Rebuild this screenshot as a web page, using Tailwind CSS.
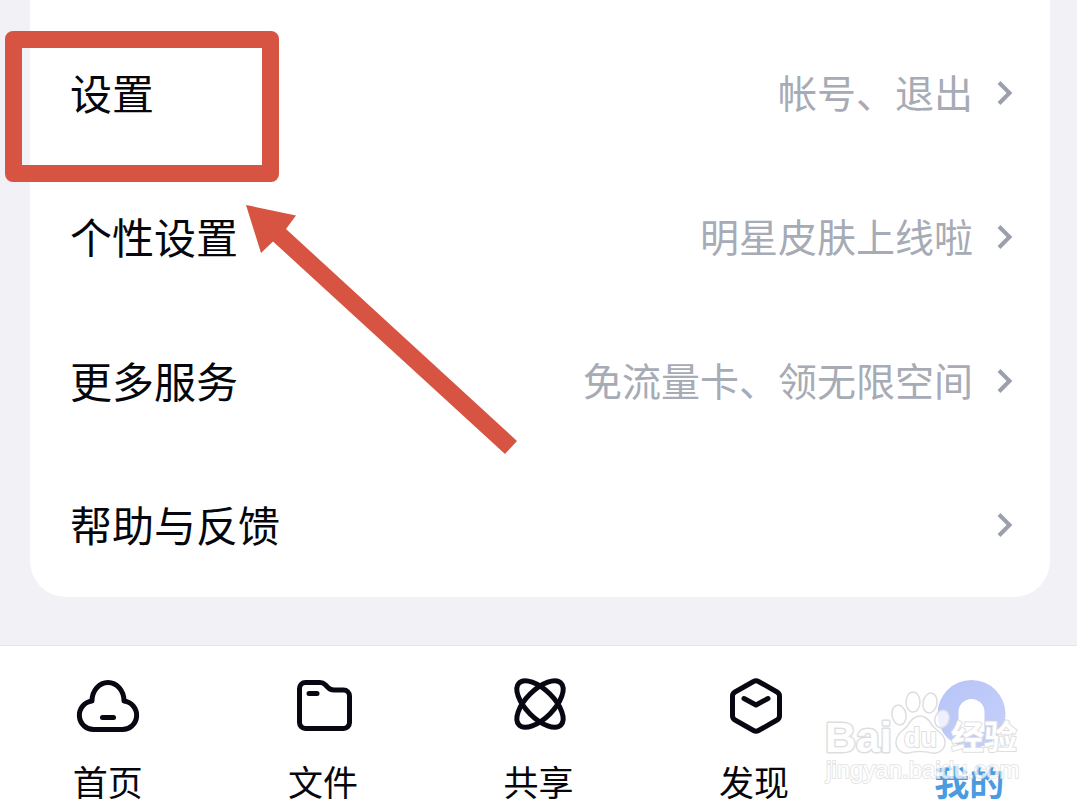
<!DOCTYPE html>
<html lang="zh-CN">
  <head>
    <meta charset="utf-8" />
    <meta name="viewport" content="width=device-width, initial-scale=1" />
    <title>我的</title>
    <script src="https://cdn.jsdelivr.net/npm/@tailwindcss/browser@4"></script>
  </head>

  <body class="relative min-h-screen overflow-x-hidden bg-[#f1f1f6] font-['Noto_Sans_CJK_SC',sans-serif] text-[#05070d]">
    <main class="mr-[27px] mb-12 ml-[30px] rounded-b-[36px] bg-white pt-[21px]">
      <ul>
        <li>
          <a href="#" class="flex h-36 items-center justify-between pr-[37px] pl-10">
            <span class="pb-1 text-[42px]">设置</span>
            <span class="flex items-center gap-6 text-[39px] text-[#a6abb5]">
              <span class="pb-1">帐号、退出</span>
              <svg class="h-6 w-4" viewBox="0 0 16 24" fill="none" stroke="#9a9faa" stroke-width="4"><path d="M2 1.500l10.500 10.500L2 22.500" /></svg>
            </span>
          </a>
        </li>
        <li>
          <a href="#" class="flex h-36 items-center justify-between pr-[37px] pl-10">
            <span class="pb-1 text-[42px]">个性设置</span>
            <span class="flex items-center gap-6 text-[39px] text-[#a6abb5]">
              <span class="pb-1">明星皮肤上线啦</span>
              <svg class="h-6 w-4" viewBox="0 0 16 24" fill="none" stroke="#9a9faa" stroke-width="4"><path d="M2 1.500l10.500 10.500L2 22.500" /></svg>
            </span>
          </a>
        </li>
        <li>
          <a href="#" class="flex h-36 items-center justify-between pr-[37px] pl-10">
            <span class="pb-1 text-[42px]">更多服务</span>
            <span class="flex items-center gap-6 text-[39px] text-[#a6abb5]">
              <span class="pb-1">免流量卡、领无限空间</span>
              <svg class="h-6 w-4" viewBox="0 0 16 24" fill="none" stroke="#9a9faa" stroke-width="4"><path d="M2 1.500l10.500 10.500L2 22.500" /></svg>
            </span>
          </a>
        </li>
        <li>
          <a href="#" class="flex h-36 items-center justify-between pr-[37px] pl-10">
            <span class="pb-1 text-[42px]">帮助与反馈</span>
            <svg class="h-6 w-4" viewBox="0 0 16 24" fill="none" stroke="#9a9faa" stroke-width="4"><path d="M2 1.500l10.500 10.500L2 22.500" /></svg>
          </a>
        </li>
      </ul>
    </main>

    <!-- bottom tabs -->
    <nav class="relative grid grid-cols-5 border-t border-[#e6e6ea] bg-white pt-7 pb-px text-[35px] leading-[50px]">
      <a href="#" class="flex flex-col items-center gap-[18px]">
        <svg class="size-16" viewBox="0 0 64 64" fill="none" stroke="#070812" stroke-width="5" stroke-linejoin="round" stroke-linecap="round">
          <path d="M16 27A16 18.500 0 0 1 48 27A14.300 14.300 0 0 1 46 55.500H18A14.300 14.300 0 0 1 16 27Z" />
          <path d="M26.500 43.500h11" />
        </svg>
        首页
      </a>
      <a href="#" class="flex flex-col items-center gap-[18px]">
        <svg class="size-16" viewBox="0 0 64 64" fill="none" stroke="#070812" stroke-width="5" stroke-linejoin="round" stroke-linecap="round">
          <path d="M14.500 8.500H29Q32 8.500 34 10.500L37 13.500Q39.500 16 43 16H52.500a6 6 0 0 1 6 6V48.500a6 6 0 0 1-6 6H14.500a6 6 0 0 1-6-6V14.500a6 6 0 0 1 6-6Z" />
          <path d="M18 19.500h8" />
        </svg>
        文件
      </a>
      <a href="#" class="flex flex-col items-center gap-[18px]">
        <svg class="size-16" viewBox="0 0 64 64" fill="none" stroke="#070812" stroke-width="5">
          <ellipse cx="34" cy="30" rx="29.600" ry="14" transform="rotate(45 34 30)" />
          <ellipse cx="34" cy="30" rx="29.600" ry="14" transform="rotate(-45 34 30)" />
        </svg>
        共享
      </a>
      <a href="#" class="flex flex-col items-center gap-[18px]">
        <svg class="size-16" viewBox="0 0 64 64" fill="none" stroke="#070812" stroke-width="5" stroke-linejoin="round" stroke-linecap="round">
          <path d="M31.500 7.500Q34 6 36.500 7.500L55 18Q57.500 19.500 57.500 22V42Q57.500 44.500 55 46L36.500 56.500Q34 58 31.500 56.500L13 46Q10.500 44.500 10.500 42V22Q10.500 19.500 13 18Z" />
          <path d="M22 24.500l12 6.500l12-6.500" />
        </svg>
        发现
      </a>
      <a href="#" class="flex flex-col items-center gap-[18px] font-bold text-[#4a9be0]">
        <svg class="size-16 overflow-visible" viewBox="0 0 64 64">
          <defs>
            <linearGradient id="me" x1="0" y1="0" x2="1" y2="1">
              <stop offset="0" stop-color="#b6c4f6" />
              <stop offset="1" stop-color="#c6d0fb" />
            </linearGradient>
          </defs>
          <circle cx="34.500" cy="40" r="34" fill="url(#me)" />
          <path d="M21.500 38a13 13 0 0 1 26 0V58H21.500Z" fill="#fff" />
        </svg>
        我的
      </a>

      <!-- watermark -->
      <svg class="pointer-events-none absolute right-[57px] bottom-4 h-[100px] w-[200px]" viewBox="0 0 200 100" fill="#fff" stroke="#dedee0" stroke-width="2" stroke-linejoin="round" font-family="Liberation Sans, Noto Sans CJK SC, sans-serif">
        <text x="5" y="61" font-size="43" font-weight="bold" stroke-width="3" paint-order="stroke">Bai</text>
        <g fill-opacity=".75" stroke-width="1.500">
          <ellipse cx="79" cy="24" rx="7" ry="10" transform="rotate(-10 79 24)" />
          <ellipse cx="93" cy="11" rx="7" ry="10" />
          <ellipse cx="110" cy="12" rx="7" ry="10" transform="rotate(10 110 12)" />
          <ellipse cx="122" cy="28" rx="7" ry="9" transform="rotate(20 122 28)" />
        </g>
        <path d="M100 25C94 25 91 29 88 34C84 40 76 42 76 51C76 58 81 63 88 62C96 60 104 60 112 62C120 63 125 58 125 51C125 43 117 41 112 34C109 29 106 25 100 25Z" stroke-width="1.500" />
        <text x="84" y="56" font-size="27" font-weight="bold" paint-order="stroke">du</text>
        <text x="131" y="58" font-size="33" font-weight="bold" font-family="Noto Sans CJK SC, sans-serif" paint-order="stroke">经验</text>
        <text x="6" y="87" font-size="24" paint-order="stroke" opacity=".75">jingyan.baidu.com</text>
      </svg>
    </nav>

    <!-- highlight box and arrow -->
    <div class="pointer-events-none absolute top-[31px] left-[5px] h-[151px] w-[274px] rounded-lg border-[17px] border-[#d75442]"></div>
    <svg class="pointer-events-none absolute top-[205px] left-[246px] h-[250px] w-[272px]" viewBox="0 0 272 250" fill="#d75442">
      <path d="M0 0L50 10.500L40 24L271 236L259 249L27 36.500L15 48Z" />
    </svg>
  </body>
</html>
